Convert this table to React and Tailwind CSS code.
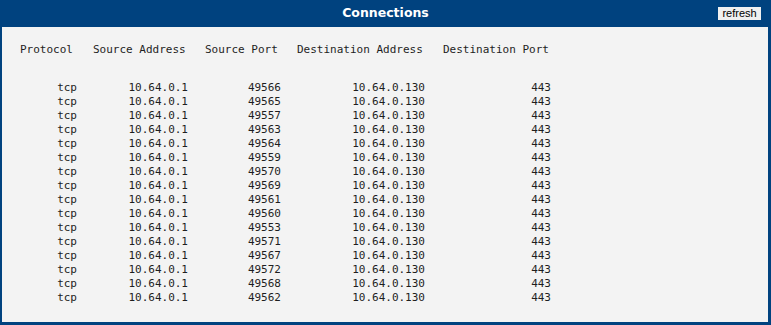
import React from "react";

// Connection table rows, as printed by the router status page
const ports = [
  49566, 49565, 49557, 49563, 49564, 49559, 49570, 49569,
  49561, 49560, 49553, 49571, 49567, 49572, 49568, 49562,
];

const rows = ports.map((port) => ({
  proto: "tcp",
  src: "10.64.0.1",
  sport: port,
  dst: "10.64.0.130",
  dport: 443,
}));

const mono = { fontFamily: '"DejaVu Sans Mono", "Liberation Mono", monospace' };

const App = () => {
  return (
    <div className="w-[771px] h-[325px] bg-[#00427f] flex flex-col">
      {/* Title bar */}
      <div className="h-[27px] grid grid-cols-[1fr_auto_1fr] items-center">
        <div />
        <h1
          className="text-white text-[12.5px] font-bold leading-none"
          style={{ fontFamily: '"DejaVu Sans", Verdana, sans-serif' }}
        >
          Connections
        </h1>
        <div className="flex justify-end pr-[10px]">
          <button
            className="h-[13px] w-[43px] bg-[#f0f0f0] text-[11px] leading-[13px] text-black"
            style={{ fontFamily: '"Liberation Sans", Arial, sans-serif' }}
          >
            refresh
          </button>
        </div>
      </div>

      {/* Body */}
      <div
        className="flex-1 ml-[2px] mr-[3px] mb-[3px] bg-[#f3f3f3] text-[11px] leading-[14px] text-[#1e1e1e] pt-[16px]"
        style={mono}
      >
        <div className="flex pl-[18px] whitespace-pre">
          <span className="w-[73px]">Protocol</span>
          <span className="w-[112px]">Source Address</span>
          <span className="w-[92px]">Source Port</span>
          <span className="w-[146px]">Destination Address</span>
          <span>Destination Port</span>
        </div>

        <div className="mt-[24px]">
          {rows.map((r, i) => (
            <div key={i} className="flex text-right">
              <span className="w-[75px]">{r.proto}</span>
              <span className="w-[111px]">{r.src}</span>
              <span className="w-[93px]">{r.sport}</span>
              <span className="w-[144px]">{r.dst}</span>
              <span className="w-[126px]">{r.dport}</span>
            </div>
          ))}
        </div>
      </div>
    </div>
  );
};

export default App;
